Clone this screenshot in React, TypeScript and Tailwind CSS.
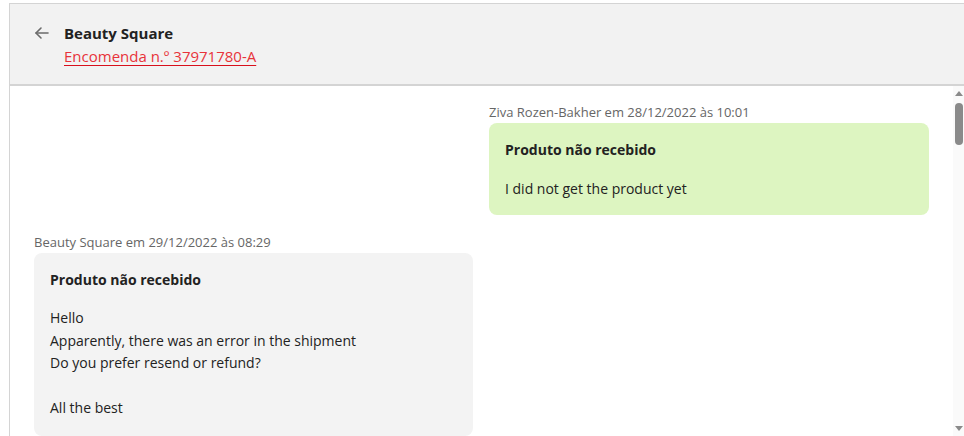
import React from "react";

export default function App() {
  const font = { fontFamily: '"Open Sans", "Noto Sans", sans-serif' };
  return (
    <div className="w-[964px] h-[436px] bg-white pt-[3px] pl-[9px] overflow-hidden" style={font}>
      <div className="h-full flex flex-col border-l border-t border-[#d4d4d4]">
        <div className="h-[82px] shrink-0 bg-[#f2f2f2] border-b-2 border-[#d4d4d4] flex items-start pl-[24px] pt-[19px]">
          <div className="w-[16px] h-[20px] flex items-center mr-[14px]">
            <svg width="16" height="16" viewBox="0 0 16 16" fill="none" stroke="#6b6b6b" strokeWidth="1.6" strokeLinecap="round" strokeLinejoin="round">
              <path d="M14 8H2" />
              <path d="M7 3L2 8l5 5" />
            </svg>
          </div>
          <div className="flex flex-col">
            <div className="text-[15px] leading-[20px] font-bold text-[#222]">Beauty Square</div>
            <a className="mt-[3px] text-[15px] leading-[20px] text-[#e8333a] underline decoration-[#d8101c] underline-offset-[3px]">
              Encomenda n.º 37971780-A
            </a>
          </div>
        </div>
        <div className="flex-1 min-h-0 flex">
          <div className="flex-1 px-[24px] pt-[17px] flex flex-col text-[#222]">
            <div className="self-end w-[440px] flex flex-col">
              <div className="text-[13px] leading-[18px] text-[#666]">Ziva Rozen-Bakher em 28/12/2022 às 10:01</div>
              <div className="mt-[2px] bg-[#ddf5c1] rounded-[8px] px-[16px] pt-[16px] pb-[15px] flex flex-col gap-[17px] text-[14px] leading-[22px]">
                <div className="font-bold">Produto não recebido</div>
                <div>I did not get the product yet</div>
              </div>
            </div>
            <div className="mt-[18px] w-[439px] flex flex-col">
              <div className="text-[13px] leading-[18px] text-[#666]">Beauty Square em 29/12/2022 às 08:29</div>
              <div className="mt-[2px] bg-[#f3f3f3] rounded-[8px] p-[16px] flex flex-col gap-[16px] text-[14px] leading-[22.5px]">
                <div className="font-bold leading-[22px]">Produto não recebido</div>
                <div className="flex flex-col">
                  <div>Hello</div>
                  <div>Apparently, there was an error in the shipment</div>
                  <div>Do you prefer resend or refund?</div>
                  <div className="h-[22.5px]"></div>
                  <div>All the best</div>
                </div>
              </div>
            </div>
          </div>
          <div className="w-[11px] shrink-0 bg-[#fafafa] flex flex-col items-center pt-[5px] pb-[5px]">
            <svg width="8" height="5" viewBox="0 0 8 5"><path d="M4 0L8 5H0Z" fill="#8a8a8a" /></svg>
            <div className="mt-[7px] w-[8px] h-[42px] rounded-[4px] bg-[#8a8a8a]"></div>
            <div className="flex-1"></div>
            <svg width="8" height="5" viewBox="0 0 8 5"><path d="M0 0H8L4 5Z" fill="#8a8a8a" /></svg>
          </div>
        </div>
      </div>
    </div>
  );
}
